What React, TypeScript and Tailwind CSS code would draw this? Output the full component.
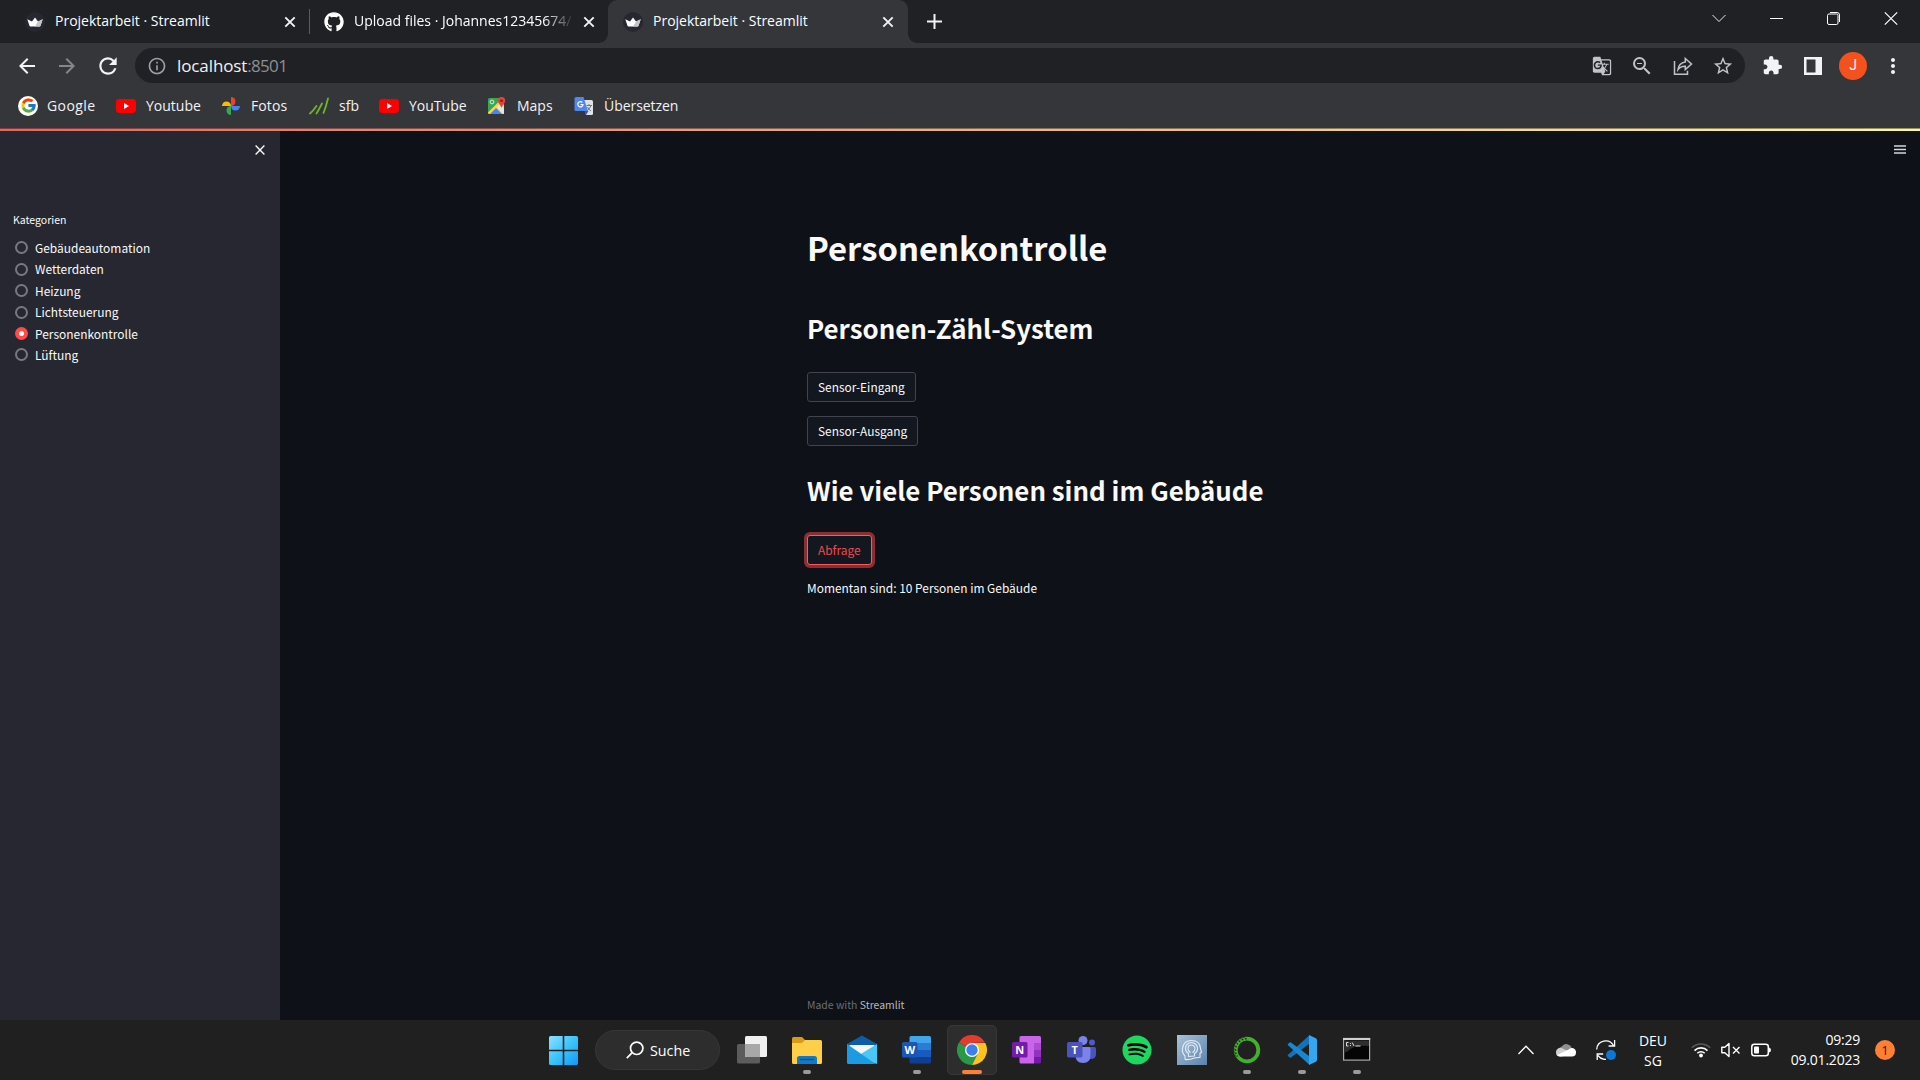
import type { ReactNode } from "react";
import { FaGithub, FaSpotify } from "react-icons/fa";
import { FcGoogle } from "react-icons/fc";
import {
  MdArrowBack,
  MdArrowForward,
  MdExtension,
  MdGTranslate,
  MdInfoOutline,
  MdMoreVert,
  MdRefresh,
  MdStarBorder,
  MdZoomOut,
} from "react-icons/md";

/* ---------- browser icons ---------- */

function CloseIcon({ className = "" }: { className?: string }) {
  return (
    <svg viewBox="0 0 12 12" className={`size-3 shrink-0 ${className}`} fill="none" stroke="#f1f3f4" strokeWidth="1.9">
      <path d="M1.3 1.3 10.7 10.7M10.7 1.3 1.3 10.7" />
    </svg>
  );
}

function Crown() {
  return (
    <svg viewBox="0 0 20 20" className="size-5 shrink-0">
      <circle cx="10" cy="10" r="10" fill="#262730" />
      <path d="M2.3 7.2 7 9.4 10 5.6l3 3.8 4.7-2.2-2.2 6.6q-.2.6-.9.6H5.4q-.7 0-.9-.6Z" fill="#fff" />
      <path d="M13 9.4l4.7-2.2-2.2 6.6q-.2.6-.9.6H10Z" fill="#c4c4c8" />
    </svg>
  );
}

function YoutubeIcon() {
  return (
    <svg viewBox="0 0 20 20" className="size-5 shrink-0">
      <rect x="0" y="3" width="20" height="14" rx="3.4" fill="#f00" />
      <path d="M8 7.1v5.8l5-2.9Z" fill="#fff" />
    </svg>
  );
}

function PhotosIcon() {
  return (
    <svg viewBox="0 0 20 20" className="size-5 shrink-0">
      <path d="M10 1a4.5 4.5 0 0 1 0 9Z" fill="#ea4335" />
      <path d="M19 10a4.5 4.5 0 0 1-9 0Z" fill="#4285f4" />
      <path d="M10 19a4.5 4.5 0 0 1 0-9Z" fill="#34a853" />
      <path d="M1 10a4.5 4.5 0 0 1 9 0Z" fill="#fbbc04" />
    </svg>
  );
}

function SfbIcon() {
  return (
    <svg viewBox="0 0 20 20" className="size-5 shrink-0" fill="none" stroke="#6cb52d" strokeWidth="1.8" strokeLinecap="round">
      <path d="M1 17.5Q4.500 14.500 7.500 10M7.500 17.500Q10.500 12.500 13 7.500M14.500 17Q17 11 19 2.500" />
    </svg>
  );
}

function MapsIcon() {
  return (
    <svg viewBox="0 0 20 20" className="size-5 shrink-0">
      <rect x="1" y="2" width="16" height="16" rx="1.5" fill="#34a853" />
      <path d="M1 16.500 13 4.500 17 9v7.500q0 1.500-1.500 1.500h-13Q1 18 1 16.500Z" fill="#fbd551" />
      <path d="M3 18l6-6 6 6Z" fill="#4285f4" />
      <path d="M10 11l3-3 4 4v4.500q0 1.500-1 1.500Z" fill="#e4e6ea" />
      <circle cx="5" cy="6" r="1.900" fill="none" stroke="#d5f0dc" strokeWidth="1" />
      <path d="M14.500 1a3.700 3.700 0 0 1 3.700 3.700c0 2.600-3 4-3.700 7.300-.7-3.300-3.700-4.700-3.700-7.300A3.700 3.700 0 0 1 14.500 1Z" fill="#e2453a" />
      <circle cx="14.500" cy="4.700" r="1.300" fill="#7c1c16" />
    </svg>
  );
}

function TranslateIcon() {
  return (
    <svg viewBox="0 0 20 20" className="size-5 shrink-0">
      <path d="M8 4h9.500q1.500 0 1.500 1.500v12q0 1.500-1.500 1.500H12Z" fill="#dfe2e6" />
      <path d="M12.500 9.500h5.500M15 8v1.500M17 9.500q-1 3.500-4.500 5.500M13.500 11q1 2.500 3.500 4" stroke="#6f7780" fill="none" />
      <path d="M12 19l-1.500-4h4Z" fill="#3a51b8" />
      <path d="M2 1h7.500l4.500 14H2Q.5 15 .5 13.500v-11Q.5 1 2 1Z" fill="#5087ec" />
      <path d="M8.300 6.500A2.600 2.600 0 1 0 9 8.500H6.500" stroke="#fff" strokeWidth="1.200" fill="none" />
    </svg>
  );
}

/* ---------- tab strip ---------- */

function Tab({ icon, title, active = false, fade = false }: { icon: ReactNode; title: string; active?: boolean; fade?: boolean }) {
  return (
    <div
      className={`relative flex h-[43px] w-[300px] items-center pr-[14px] pl-[15px] ${active ? "rounded-t-[9px] bg-[#35363a]" : ""}`}
    >
      {icon}
      <span
        className={`mb-[2px] ml-[10px] w-[220px] overflow-hidden text-[14px] leading-[20px] whitespace-nowrap text-white ${
          fade ? "[mask-image:linear-gradient(to_right,#000_190px,transparent_220px)]" : ""
        }`}
      >
        {title}
      </span>
      <CloseIcon className="ml-auto" />
      {active && (
        <>
          <span className="absolute bottom-0 -left-[9px] size-[9px] bg-[radial-gradient(circle_at_0_0,transparent_8.500px,#35363a_9px)]" />
          <span className="absolute -right-[9px] bottom-0 size-[9px] bg-[radial-gradient(circle_at_100%_0,transparent_8.500px,#35363a_9px)]" />
        </>
      )}
    </div>
  );
}

function TabStrip() {
  return (
    <div className="flex h-[43px] items-center bg-[#202124]">
      <div className="flex pl-[10px]">
        <Tab icon={<Crown />} title="Projektarbeit · Streamlit" />
        <span className="mt-[9px] -mr-px -ml-px h-[25px] w-px bg-[#5a5c60]" />
        <Tab icon={<FaGithub className="size-5 shrink-0 text-white" />} title="Upload files · Johannes12345674/" fade />
        <span className="-ml-px" />
        <Tab icon={<Crown />} title="Projektarbeit · Streamlit" active />
      </div>
      <svg viewBox="0 0 15 15" className="ml-[19px] size-[15px]" fill="none" stroke="#f1f3f4" strokeWidth="2">
        <path d="M7.500 0v15M0 7.500h15" />
      </svg>
      <div className="ml-auto flex h-full items-start pt-[10px] pr-[22px]">
        <svg viewBox="0 0 14 16" className="mr-[44px] h-4 w-[14px]" fill="none" stroke="#e8eaed">
          <path d="M.5 5 7 11.500 13.500 5" />
        </svg>
        <svg viewBox="0 0 13 16" className="mr-[44px] h-4 w-[13px]" fill="none" stroke="#fff">
          <path d="M0 8.500h13" />
        </svg>
        <svg viewBox="0 0 14 16" className="mr-[43px] h-4 w-[14px]" fill="none" stroke="#fff">
          <rect x=".5" y="4" width="10.500" height="10.500" rx="1.500" />
          <path d="M3 2.500h7q2.500 0 2.500 2.500v7" />
        </svg>
        <svg viewBox="0 0 14 16" className="h-4 w-[14px]" fill="none" stroke="#fff" strokeWidth="1.200">
          <path d="M.8 2.300 13.200 14.700M13.200 2.300.8 14.700" />
        </svg>
      </div>
    </div>
  );
}

function AddressBar() {
  return (
    <div className="flex h-[40px] items-center bg-[#35363a] pt-[5px]">
      <MdArrowBack className="ml-[15px] size-6 text-[#f1f3f4]" />
      <MdArrowForward className="ml-[16px] size-6 text-[#84868a]" />
      <MdRefresh className="ml-[16px] size-[26px] text-[#f1f3f4]" />
      <div className="ml-[14px] flex h-[35px] w-[1610px] items-center rounded-full bg-[#202124] pl-[12px]">
        <MdInfoOutline className="size-5 text-[#9aa0a6]" />
        <span className="ml-[10px] text-[17px] leading-[24px] tracking-[-0.1px] text-[#f1f3f4]">localhost</span>
        <span className="text-[17px] leading-[24px] tracking-[-0.7px] text-[#8d9095]">:8501</span>
        <div className="ml-auto flex items-center pr-[11px] text-[#c0c3c7]">
          <MdGTranslate className="mr-[18px] size-5" />
          <MdZoomOut className="mr-[19px] size-[24px]" />
          <svg viewBox="0 0 20 20" className="mr-[19px] size-5" fill="none" stroke="currentColor" strokeWidth="1.500">
            <path d="M1.500 5v13.200h13v-3.500" />
            <path d="M12.300 2.500 18.500 8l-6.200 5.500v-3.300q-4.800-.2-7.300 3.300.6-6.500 7.300-7.600Z" />
          </svg>
          <MdStarBorder className="size-[22px]" />
        </div>
      </div>
      <MdExtension className="ml-[17px] size-[21px] text-[#f1f3f4]" />
      <svg viewBox="0 0 18 18" className="ml-[21px] size-[18px]">
        <path d="M0 0h18v18H0ZM2.500 2.500v13h9v-13Z" fill="#f1f3f4" fillRule="evenodd" />
      </svg>
      <span className="ml-[17px] flex size-[28px] items-center justify-center rounded-full bg-[#f4511e] font-[Roboto] text-[14px] text-white">
        J
      </span>
      <MdMoreVert className="ml-[14px] size-6 text-[#f1f3f4]" />
    </div>
  );
}

function Bookmark({ icon, label, className }: { icon: ReactNode; label: string; className: string }) {
  return (
    <div className={`flex shrink-0 items-center gap-[10px] ${className}`}>
      {icon}
      <span>{label}</span>
    </div>
  );
}

function Bookmarks() {
  return (
    <div className="flex h-[45px] items-center bg-[#35363a] pl-[18px] text-[14px] whitespace-nowrap text-[#f1f3f4]">
      <Bookmark
        icon={
          <span className="flex size-5 items-center justify-center rounded-full bg-white">
            <FcGoogle className="size-[17px]" />
          </span>
        }
        label="Google"
        className="w-[98px] gap-[9px]! tracking-[0.4px]"
      />
      <Bookmark icon={<YoutubeIcon />} label="Youtube" className="w-[105px]" />
      <Bookmark icon={<PhotosIcon />} label="Fotos" className="w-[88px] tracking-[0.1px]" />
      <Bookmark icon={<SfbIcon />} label="sfb" className="w-[70px]" />
      <Bookmark icon={<YoutubeIcon />} label="YouTube" className="w-[108px]" />
      <Bookmark icon={<MapsIcon />} label="Maps" className="w-[87px]" />
      <Bookmark icon={<TranslateIcon />} label="Übersetzen" className="tracking-[-0.05px]" />
    </div>
  );
}

/* ---------- Streamlit page ---------- */

const categories = ["Gebäudeautomation", "Wetterdaten", "Heizung", "Lichtsteuerung", "Personenkontrolle", "Lüftung"];

function Sidebar() {
  return (
    <aside className="flex w-[280px] shrink-0 flex-col bg-[#262730] text-[#fafafa]">
      <div className="flex justify-end pt-[14px] pr-[15px]">
        <svg viewBox="0 0 10 10" className="size-[10px]" fill="none" stroke="#fafafa" strokeWidth="1.400">
          <path d="M.6.6 9.400 9.400M9.400.6.6 9.400" />
        </svg>
      </div>
      <p className="mt-[57px] ml-[13px] text-[10.500px] leading-[16px] text-[#fafafa]">Kategorien</p>
      <div className="mt-[9.300px] flex flex-col">
        {categories.map((name) => (
          <label key={name} className="flex h-[21.400px] items-center pl-[15px] text-[11.950px] leading-[20px]">
            {name === "Personenkontrolle" ? (
              <span className="flex size-[13px] items-center justify-center rounded-full bg-[#ff4b4b]">
                <span className="size-[5px] rounded-full bg-white" />
              </span>
            ) : (
              <span className="size-[13px] rounded-full border-2 border-[#787981]" />
            )}
            <span className="ml-[7px]">{name}</span>
          </label>
        ))}
      </div>
    </aside>
  );
}

function StButton({ children, focused = false }: { children: ReactNode; focused?: boolean }) {
  return (
    <button
      className={`flex h-[30px] items-center rounded-[3px] border bg-[#131720] px-[10px] text-[11.900px] leading-[20px] ${
        focused ? "border-[#f9595a] text-[#ef4a4b] ring-3 ring-[#8b2e33]" : "border-[#41444c] text-[#fafafa]"
      }`}
    >
      {children}
    </button>
  );
}

function Page() {
  return (
    <main className="flex flex-1 bg-[#0e1117] text-[#fafafa]">
      <div className="flex flex-1 flex-col items-start pl-[527px]">
        <h1 className="mt-[96px] text-[32.800px] leading-[40px] font-bold">Personenkontrolle</h1>
        <h2 className="mt-[41px] text-[25.850px] leading-[40px] font-bold">Personen-Zähl-System</h2>
        <div className="mt-[24px] flex flex-col items-start gap-[14px]">
          <StButton>Sensor-Eingang</StButton>
          <StButton>Sensor-Ausgang</StButton>
        </div>
        <h2 className="mt-[24px] text-[25.850px] leading-[40px] font-bold">Wie viele Personen sind im Gebäude</h2>
        <div className="mt-[25px]">
          <StButton focused>Abfrage</StButton>
        </div>
        <p className="mt-[13px] text-[11.930px] leading-[20px]">Momentan sind: 10 Personen im Gebäude</p>
        <footer className="mt-auto mb-[5px] text-[10.450px] leading-[20px] text-[#6c6e74]">
          Made with <span className="text-[#b9babd]">Streamlit</span>
        </footer>
      </div>
      <svg viewBox="0 0 12 9" className="mt-[14px] mr-[14px] h-[9px] w-3 shrink-0">
        <path d="M0 1h12M0 4.500h12M0 8h12" stroke="#d5d6d8" strokeWidth="1.700" />
      </svg>
    </main>
  );
}

/* ---------- taskbar ---------- */

function TaskItem({ children, running = false, active = false }: { children: ReactNode; running?: boolean; active?: boolean }) {
  return (
    <div
      className={`relative flex size-[50px] items-center justify-center rounded-[5px] ${
        active ? "border border-[#373737] bg-[#2d2d2d]" : ""
      }`}
    >
      <svg viewBox="0 0 30 30" className="size-[30px]">
        {children}
      </svg>
      {running && <span className="absolute bottom-px left-[21px] h-1 w-2 rounded-full bg-[#9a9a9a]" />}
      {active && <span className="absolute bottom-0 left-[14px] h-1 w-5 rounded-full bg-[#ff8033]" />}
    </div>
  );
}

function Taskbar() {
  return (
    <div className="flex h-[60px] items-center bg-[#202020] text-white">
      <svg viewBox="0 0 29 29" className="ml-[549px] size-[29px]">
        <defs>
          <linearGradient id="win" x1="0" y1="0" x2="1" y2="1" gradientUnits="objectBoundingBox">
            <stop offset="0" stopColor="#8be2ff" />
            <stop offset=".5" stopColor="#3ac4fb" />
            <stop offset="1" stopColor="#1597f5" />
          </linearGradient>
        </defs>
        <path
          d="M1.500 0H13.700V13.700H0V1.500Q0 0 1.500 0ZM15.300 0H27.500Q29 0 29 1.500V13.700H15.300ZM0 15.300H13.700V29H1.500Q0 29 0 27.500ZM15.300 15.300H29V27.500Q29 29 27.500 29H15.300Z"
          fill="url(#win)"
        />
      </svg>
      <div className="ml-[17px] flex h-[40px] w-[125px] items-center rounded-full border border-[#363636] bg-[#2d2d2d] pl-[30px]">
        <svg viewBox="0 0 18 18" className="size-[18px]" fill="none" stroke="#fff" strokeWidth="1.700">
          <circle cx="10.700" cy="7.300" r="6.200" />
          <path d="M6.200 11.700.8 17.200" />
        </svg>
        <span className="mt-px ml-[6px] text-[14.300px] leading-[20px]">Suche</span>
      </div>
      <div className="ml-[7px] flex gap-[5px]">
        <TaskItem>
          <rect x="0" y="9" width="23" height="19.500" rx="1.500" fill="#5c5c5c" />
          <rect x="8" y="1" width="22" height="21" rx="1.500" fill="#f0f0f0" />
          <path d="M8 9h15v13H9.500Q8 22 8 20.500Z" fill="#a8a8a8" />
        </TaskItem>
        <TaskItem running>
          <path d="M0 5.500V3.500Q0 2 1.500 2H10l3 3v4H0Z" fill="#d99a16" />
          <path d="M0 8h10l3-3h15.500Q30 5 30 6.500v21q0 1.500-1.500 1.500h-27Q0 29 0 27.500Z" fill="#ffcf48" />
          <path d="M5 29v-5.500Q5 21 7.500 21h15q2.500 0 2.500 2.500V29Z" fill="#1478c4" />
          <path d="M8 24.500h14" stroke="#0b4f8c" strokeWidth="1.400" />
        </TaskItem>
        <TaskItem>
          <path d="M0 9 15 0.500 30 9v4H0Z" fill="#0c5ca8" />
          <path d="M2.500 10h25v8L15 24 2.500 18Z" fill="#f4f6f8" />
          <path d="M30 9 9 22l21 7Z" fill="#49c8f5" />
          <path d="M0 9l15 10.500L28.500 29h-27Q0 29 0 27.500Z" fill="#1a9be3" />
        </TaskItem>
        <TaskItem running>
          <path d="M9 1h18.500Q29 1 29 2.500V8H7.500V2.500Q7.500 1 9 1Z" fill="#41a5ee" />
          <path d="M7.500 8H29v7H7.500Z" fill="#2b7cd3" />
          <path d="M7.500 15H29v7H7.500Z" fill="#185abd" />
          <path d="M7.500 22H29v5q0 1.500-1.500 1.500H9q-1.500 0-1.500-1.500Z" fill="#103f91" />
          <rect x="0" y="7" width="15.500" height="15.500" rx="1.500" fill="#1a56b8" />
          <text x="7.700" y="18.500" textAnchor="middle" fontFamily="Open Sans" fontWeight="700" fontSize="11" fill="#fff">
            W
          </text>
        </TaskItem>
        <TaskItem active>
          <path d="M15 15 2 7.500A15 15 0 0 1 28 7.500L15 8Z" fill="#e33b2e" />
          <path d="M15 15l6.500 3.800L15 30A15 15 0 0 1 2 7.500Z" fill="#2a9847" />
          <path d="M15 8h13.300A15 15 0 0 1 15 30l6-11.500Z" fill="#fcc31e" />
          <circle cx="15" cy="15" r="7" fill="#fff" />
          <circle cx="15" cy="15" r="5.700" fill="#3b7ff0" />
        </TaskItem>
        <TaskItem>
          <path d="M9 1h13v27.500H9q-1.500 0-1.500-1.500V2.500Q7.500 1 9 1Z" fill="#ca64ea" />
          <path d="M22 1h5.500Q29 1 29 2.500V8h-7Z" fill="#ca64ea" />
          <path d="M22 8h7v7h-7Z" fill="#ae4bd5" />
          <path d="M22 15h7v7h-7Z" fill="#9332bf" />
          <path d="M22 22h7v5q0 1.500-1.500 1.500H22Z" fill="#7719aa" />
          <rect x="0" y="7" width="15.500" height="15.500" rx="1.500" fill="#7719aa" />
          <text x="7.700" y="18.500" textAnchor="middle" fontFamily="Open Sans" fontWeight="700" fontSize="11" fill="#fff">
            N
          </text>
        </TaskItem>
        <TaskItem>
          <circle cx="25" cy="7.500" r="3" fill="#5059c9" />
          <circle cx="16" cy="5.500" r="4.500" fill="#7b83eb" />
          <path d="M20 12h7.500Q29 12 29 13.500V19q0 5-5 5h-4Z" fill="#4b53bc" />
          <path d="M9 12h13q1.500 0 1.500 1.500V20q0 8-7.500 8t-7.500-8Z" fill="#7b83eb" />
          <rect x="0" y="7" width="15.500" height="15.500" rx="1.500" fill="#4b53bc" />
          <text x="7.700" y="18.500" textAnchor="middle" fontFamily="Open Sans" fontWeight="700" fontSize="11" fill="#fff">
            T
          </text>
        </TaskItem>
        <TaskItem>
          <circle cx="15" cy="15" r="13" fill="#000" />
          <FaSpotify size={30} color="#1ed760" />
        </TaskItem>
        <TaskItem>
          <defs>
            <linearGradient id="head" x1="0" y1="0" x2="1" y2="1">
              <stop offset="0" stopColor="#a9c3d8" />
              <stop offset="1" stopColor="#5d82ab" />
            </linearGradient>
          </defs>
          <rect width="30" height="30" fill="url(#head)" />
          <g fill="none" stroke="#e3edf6" strokeWidth="1.100">
            <path d="M8 24.500V21Q5 18 5.500 13.500 6.500 5.500 14.500 5.500q8.500 0 9 8l1 4-1.500.7v4l-5.500.8Q12 25 8 24.500" />
            <path d="M11.500 21.500v-3Q8.500 17 8.500 13.500A6 6 0 0 1 20.500 13.500Q20.500 17 17.500 18.500v2.500Z" />
            <path d="M13 18V17Q11 16 11 13.500a3.500 3.500 0 0 1 7 0Q18 16 16 17v1" />
          </g>
        </TaskItem>
        <TaskItem running>
          <circle cx="15" cy="15" r="11.300" fill="none" stroke="#43b02a" strokeWidth="3.800" />
          <path d="M14.500 3.700A11.300 11.300 0 0 0 5.500 21.500" fill="none" stroke="#202020" strokeWidth="1.500" strokeDasharray="1.500 1.800" />
          <path d="M12.500 2.300A12.800 12.800 0 0 0 3.500 21" fill="none" stroke="#202020" strokeWidth="1" strokeDasharray="1.200 2" />
        </TaskItem>
        <TaskItem running>
          <path d="M22 0.500 3.500 17.500 1 19.700Q.3 20.300 1 21l1.700 1.500q.6.500 1.300 0L22 9Z" fill="#1273b8" />
          <path d="M22 29.500 3.500 12.500 1 10.300Q.3 9.700 1 9l1.700-1.500q.6-.5 1.300 0L22 21Z" fill="#1788d0" />
          <path d="M22 0l6.800 3.200q1.200.6 1.200 2v19.600q0 1.400-1.200 2L22 30Z" fill="#35a7f2" />
        </TaskItem>
        <TaskItem running>
          <rect x="1.600" y="3.600" width="26" height="21.500" fill="#050505" stroke="#a9a9a9" strokeWidth="1.200" />
          <path d="M2.300 6h24.700v5Q12 9.500 6 16l-3.700 2Z" fill="#2d2d2d" />
          <path d="M1 4h27.200" stroke="#d0d0d0" strokeWidth="2.200" />
          <path d="M6.500 7.500h-2v3.500h2M8.500 8v.9M8.500 10v.9M10.200 7.500 12 11M13.500 11h5" stroke="#ddd" fill="none" />
        </TaskItem>
      </div>

      <div className="ml-auto flex h-full items-center">
        <svg viewBox="0 0 16 10" className="h-[10px] w-4" fill="none" stroke="#fff" strokeWidth="1.300">
          <path d="M.5 9 8 1.300 15.500 9" />
        </svg>
        <svg viewBox="0 0 20 14" className="ml-[22px] h-[14px] w-5">
          <path d="M3.500 8.500A4.500 4.500 0 0 1 6 3.200 5.700 5.700 0 0 1 15.800 5L10 9Z" fill="#8f8f8f" />
          <path d="M0 9.500A4.300 4.300 0 0 1 6 5.200L14 9l-8 4.500H4Q0 13.500 0 9.500Z" fill="#d0d0d0" />
          <path d="M12.300 6.700a4.500 4.500 0 0 1 3.500-1.700A4.200 4.200 0 0 1 20 9.500a4 4 0 0 1-4 4H4.500Q2.500 13.500 1 12Z" fill="#fff" />
        </svg>
        <svg viewBox="0 0 20 20" className="ml-5 size-5" fill="none" stroke="#fff" strokeWidth="1.300">
          <path d="M.7 9.500A9 9 0 0 1 17.500 5.500M18.600 0v6h-6M1.200 20v-6h6M2 15.500q3 4 8 4" />
          <circle cx="15" cy="15" r="5" fill="#0a78d6" stroke="none" />
        </svg>
        <div className="mt-px ml-[18px] w-[38px] text-center text-[14px] leading-[20px]">
          DEU
          <br />
          SG
        </div>
        <svg viewBox="0 0 20 16" className="ml-[19px] h-4 w-5" fill="none" strokeWidth="1.600">
          <path d="M.8 5.800A13 13 0 0 1 19.200 5.800" stroke="#5a5a5a" />
          <path d="M3.500 8.600A9.200 9.200 0 0 1 16.500 8.600M6.300 11.300A5.300 5.300 0 0 1 13.700 11.300" stroke="#fff" />
          <circle cx="10" cy="13.500" r="1.900" fill="#fff" />
        </svg>
        <svg viewBox="0 0 20 16" className="ml-[10px] h-4 w-5" fill="none" stroke="#fff" strokeWidth="1.400">
          <path d="M.8 5.200h3L8 1.500v13L3.800 10.800h-3Z" strokeLinejoin="round" />
          <path d="M12 5l6.500 6.500M18.500 5 12 11.500" />
        </svg>
        <svg viewBox="0 0 20 14" className="ml-[10px] h-[14px] w-5">
          <rect x=".8" y="1.200" width="16.500" height="11.500" rx="2.500" fill="none" stroke="#fff" strokeWidth="1.500" />
          <rect x="3" y="3.500" width="5" height="7" rx="1" fill="#fff" />
          <path d="M18 4.500q2 .5 2 2.500t-2 2.500Z" fill="#fff" />
        </svg>
        <div className="ml-[14px] w-[75px] text-right text-[14px] leading-[20px] tracking-[-0.22px] whitespace-nowrap">
          09:29
          <br />
          09.01.2023
        </div>
        <span className="mr-[25px] ml-[15px] flex size-5 items-center justify-center rounded-full bg-[#ff8033] text-[13px] leading-none text-[#202020]">
          1
        </span>
      </div>
    </div>
  );
}

export default function App() {
  return (
    <div className="flex h-[1080px] w-[1920px] flex-col overflow-hidden bg-[#0e1117] font-['Open_Sans',sans-serif]">
      <TabStrip />
      <AddressBar />
      <Bookmarks />
      <div className="h-[3px] shrink-0 border-t border-black/40 bg-linear-to-r from-[#dc6a66] via-[#e8b083] to-[#fdf6a0]" />
      <div className="flex h-[889px] font-['Noto_Sans_CJK_SC',sans-serif]">
        <Sidebar />
        <Page />
      </div>
      <Taskbar />
    </div>
  );
}
